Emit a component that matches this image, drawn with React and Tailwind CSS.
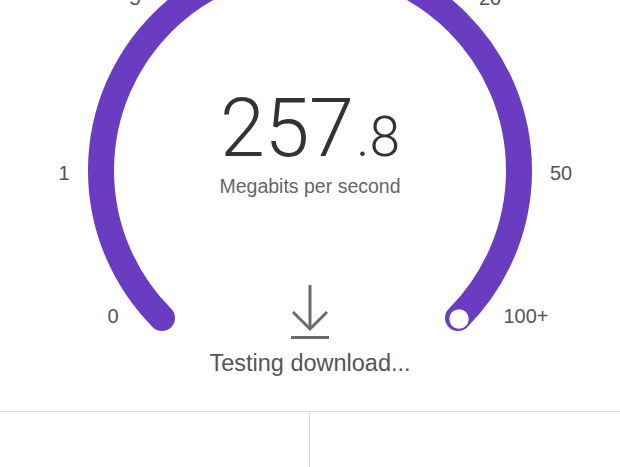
import { Fragment } from 'react';

const PURPLE = '#6a3cc2';

const labels = [
    { text: '0', x: 113, y: 316 },
    { text: '1', x: 64, y: 173 },
    { text: '5', x: 135, y: -2 },
    { text: '20', x: 490, y: -2 },
    { text: '50', x: 561, y: 173 },
    { text: '100+', x: 526, y: 316 },
];

function Gauge() {
    return (
        <svg className="absolute inset-0" width="620" height="411" viewBox="0 0 620 411">
            <path
                d="M 162 318 A 209 209 0 1 1 458 318"
                fill="none"
                stroke={PURPLE}
                strokeWidth="26"
                strokeLinecap="round"
            />
            <circle cx="459" cy="319" r="10.5" fill="#fff" stroke={PURPLE} strokeWidth="1.5" />
        </svg>
    );
}

function DownloadIcon() {
    return (
        <svg width="40" height="56" viewBox="0 0 40 56" fill="none" stroke="#6b6b6b" strokeWidth="3">
            <line x1="20" y1="0" x2="20" y2="43" />
            <polyline points="3,27 20,44 37,27" strokeLinejoin="miter" />
            <line x1="1" y1="52.5" x2="39" y2="52.5" />
        </svg>
    );
}

export default function App() {
    return (
        <div className="w-[620px] h-[467px] bg-white overflow-hidden flex flex-col font-['Liberation_Sans',Arial,sans-serif]">
            {/* Speed gauge */}
            <div className="relative h-[411px] shrink-0">
                <Gauge />
                {labels.map((l) => (
                    <span
                        key={l.text}
                        className="absolute -translate-x-1/2 -translate-y-1/2 text-[20px] leading-none text-[#555]"
                        style={{ left: l.x, top: l.y }}
                    >
                        {l.text}
                    </span>
                ))}
                <div className="relative flex flex-col items-center pt-[88px]">
                    <div className="flex items-baseline font-['Roboto',sans-serif] font-light text-[#333] leading-none">
                        <span className="text-[81px] tracking-[-0.5px]">257</span>
                        <span className="text-[55px] ml-[3px]">.8</span>
                    </div>
                    <div className="mt-[8px] text-[19.5px] leading-none text-[#666]">Megabits per second</div>
                    <div className="mt-[88px]">
                        <DownloadIcon />
                    </div>
                    <div className="mt-[11px] text-[23.5px] leading-none text-[#555]">Testing download...</div>
                </div>
            </div>
            {/* Bottom stats */}
            <div className="grid grid-cols-2 flex-1 border-t border-[#dcdcdc]">
                <div className="border-r border-[#dcdcdc]" />
                <div />
            </div>
        </div>
    );
}
